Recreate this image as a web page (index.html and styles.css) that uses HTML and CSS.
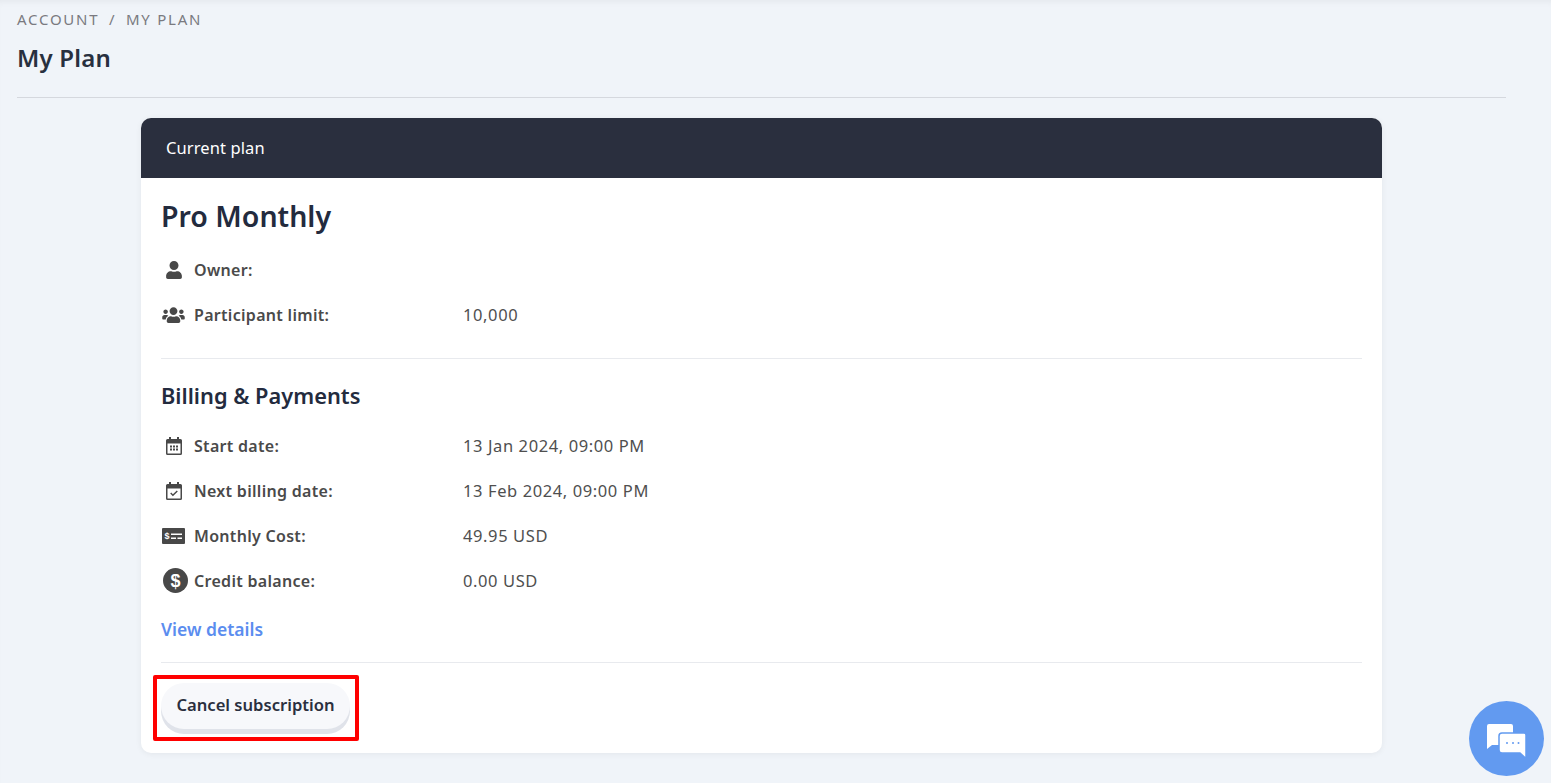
FILE: index.html
```html
<!DOCTYPE html>
<html lang="en">
<head>
    <meta charset="UTF-8">
    <title>My Plan</title>
    <link rel="stylesheet" href="styles.css">
</head>
<body>

<div class="page">
    <div class="breadcrumb">ACCOUNT <span class="sep">/</span> MY PLAN</div>
    <h1>My Plan</h1>
    <hr class="page-rule">

    <div class="card">
        <div class="card-head">Current plan</div>
        <div class="card-body">
            <h2>Pro Monthly</h2>

            <div class="row first">
                <span class="ico"><svg width="16" height="18" viewBox="0 0 448 512"><path d="M224 256c70.700 0 128-57.300 128-128S294.700 0 224 0 96 57.300 96 128s57.300 128 128 128zm89.600 32h-16.700c-22.200 10.200-46.900 16-72.900 16s-50.600-5.800-72.900-16h-16.700C60.200 288 0 348.200 0 422.400V464c0 26.500 21.500 48 48 48h352c26.500 0 48-21.500 48-48v-41.600c0-74.200-60.200-134.400-134.400-134.400z"/></svg></span>
                <span class="label">Owner:</span>
            </div>
            <div class="row">
                <span class="ico"><svg width="23" height="18" viewBox="0 0 640 512"><path d="M96 224c35.300 0 64-28.700 64-64s-28.700-64-64-64-64 28.700-64 64 28.700 64 64 64zm448 0c35.300 0 64-28.700 64-64s-28.700-64-64-64-64 28.700-64 64 28.700 64 64 64zm32 32h-64c-17.600 0-33.500 7.100-45.100 18.600 40.300 22.100 68.900 62 75.100 109.400h66c17.700 0 32-14.300 32-32v-32c0-35.300-28.700-64-64-64zm-256 0c61.900 0 112-50.100 112-112S381.900 32 320 32 208 82.100 208 144s50.100 112 112 112zm76.800 32h-8.300c-20.800 10-43.900 16-68.500 16s-47.600-6-68.500-16h-8.300C179.600 288 128 339.600 128 403.200V432c0 26.500 21.500 48 48 48h288c26.500 0 48-21.500 48-48v-28.800c0-63.600-51.600-115.200-115.200-115.200zm-223.700-13.400C161.500 263.100 145.600 256 128 256H64c-35.300 0-64 28.700-64 64v32c0 17.700 14.300 32 32 32h65.900c6.300-47.400 34.900-87.300 75.200-109.400z"/></svg></span>
                <span class="label">Participant limit:</span>
                <span class="value">10,000</span>
            </div>

            <hr class="rule rule-a">

            <h3>Billing &amp; Payments</h3>

            <div class="row first">
                <span class="ico"><svg width="16" height="18" viewBox="0 0 16 18"><path d="M3 0h2v2h6V0h2v2h1.500A1.500 1.500 0 0 1 16 3.500v13a1.500 1.500 0 0 1-1.500 1.500h-13A1.500 1.500 0 0 1 0 16.500v-13A1.500 1.500 0 0 1 1.500 2H3zM1.500 6.500v10h13v-10z"/><path d="M4 8.500h2v2H4zM7 8.500h2v2H7zM10 8.500h2v2h-2zM4 11.500h2v2H4zM7 11.500h2v2H7zM10 11.500h2v2h-2z"/></svg></span>
                <span class="label">Start date:</span>
                <span class="value">13 Jan 2024, 09:00 PM</span>
            </div>
            <div class="row">
                <span class="ico"><svg width="16" height="18" viewBox="0 0 16 18"><path d="M3 0h2v2h6V0h2v2h1.500A1.500 1.500 0 0 1 16 3.500v13a1.500 1.500 0 0 1-1.500 1.500h-13A1.500 1.500 0 0 1 0 16.500v-13A1.500 1.500 0 0 1 1.500 2H3zM1.500 6.500v10h13v-10z"/><path d="M4.200 11.600l1-1 1.700 1.700 3.900-3.900 1 1-4.900 4.900z"/></svg></span>
                <span class="label">Next billing date:</span>
                <span class="value">13 Feb 2024, 09:00 PM</span>
            </div>
            <div class="row">
                <span class="ico"><svg width="23" height="16" viewBox="0 0 23 16"><path d="M1 0h21a1 1 0 0 1 1 1v14a1 1 0 0 1-1 1H1a1 1 0 0 1-1-1V1a1 1 0 0 1 1-1z"/><text x="2.500" y="11" class="ico-text">$</text><path class="ico-cut" d="M9 5.500h11V7H9zM9 9.500h5V11H9zM15.500 9.500H20V11h-4.500z"/></svg></span>
                <span class="label">Monthly Cost:</span>
                <span class="value">49.95 USD</span>
            </div>
            <div class="row">
                <span class="ico ico-credit"><svg width="25" height="25" viewBox="0 0 25 25"><circle cx="12.500" cy="12.500" r="12.500"/><text x="12.500" y="18.500" class="ico-dollar">$</text></svg></span>
                <span class="label">Credit balance:</span>
                <span class="value">0.00 USD</span>
            </div>

            <a class="details" href="#">View details</a>

            <hr class="rule rule-b">

            <div class="cancel-wrap">
                <button class="cancel">Cancel subscription</button>
            </div>
        </div>
    </div>
</div>

<div class="chat">
    <svg width="40" height="35" viewBox="0 0 40 35">
        <path class="bubble-back" d="M2 0h22a2 2 0 0 1 2 2v7H15a3 3 0 0 0-3 3v9H5l-5 4V2a2 2 0 0 1 2-2z"/>
        <path class="bubble-front" d="M15 9h22a2 2 0 0 1 2 2v23.500L33 29H15a3 3 0 0 1-3-3V12a3 3 0 0 1 3-3z"/>
        <circle class="dot" cx="20" cy="19" r="1"/><circle class="dot" cx="26" cy="19" r="1"/><circle class="dot" cx="31.500" cy="19" r="1"/>
    </svg>
</div>

</body>
</html>
```

FILE: styles.css
```css
html, body {
    margin: 0;
    height: 100%;
}
body {
    font-family: "Noto Sans", "Open Sans", sans-serif;
    color: #4a4a4a;
    background-color: #f0f4f9;
    overflow: hidden;
    box-shadow: inset 0 6px 6px -4px rgba(0,0,0,0.05);
}
.page {
    padding: 10px 45px 0 17px;
}
.breadcrumb {
    font-size: 15px;
    line-height: 18px;
    letter-spacing: 1.75px;
    color: #7a7a80;
}
.breadcrumb .sep {
    margin: 0 4px;
}
h1 {
    margin: 12px 0 0;
    font-size: 24px;
    line-height: 36px;
    font-weight: 600;
    letter-spacing: 0.2px;
    color: #28303f;
}
.page-rule {
    margin: 21px 0 20px;
    border: 0;
    border-top: 1px solid #d5d8de;
}
.card {
    width: 1241px;
    margin-left: 124px;
    background-color: #fff;
    border-radius: 10px;
    box-shadow: 0 1px 6px rgba(0,0,0,0.06);
}
.card-head {
    height: 60px;
    line-height: 60px;
    padding-left: 25px;
    background-color: #2a2f3e;
    border-radius: 10px 10px 0 0;
    color: #fff;
    font-size: 16.500px;
    letter-spacing: 0.1px;
}
.card-body {
    padding: 20px 20px 0;
    height: 575px;
    box-sizing: border-box;
}
h2 {
    margin: -1px 0 0;
    font-size: 28.500px;
    line-height: 38px;
    font-weight: 600;
    color: #232b3e;
}
h3 {
    margin: 0;
    font-size: 21.800px;
    line-height: 30px;
    font-weight: 600;
    color: #232b3e;
}
.row {
    display: flex;
    align-items: center;
    height: 25px;
    margin-top: 20px;
    font-size: 16px;
}
.row.first {
    margin-top: 22px;
}
.ico {
    width: 25px;
    margin-right: 8px;
    flex: none;
    display: flex;
    align-items: center;
    justify-content: center;
}
.ico svg {
    flex: none;
    fill: #484848;
}
.ico-credit svg {
    margin-left: 4px;
}
.label {
    width: 269px;
    flex: none;
    font-weight: 600;
    letter-spacing: 0.3px;
}
.value {
    color: #4f4f4f;
    font-size: 16.500px;
    letter-spacing: 0.6px;
}
.ico-text {
    font-family: "Liberation Sans", sans-serif;
    font-size: 9px;
    font-weight: bold;
    fill: #fff;
}
.ico-cut {
    fill: #fff;
}
.ico-dollar {
    font-family: "Liberation Sans", sans-serif;
    font-size: 18px;
    font-weight: bold;
    text-anchor: middle;
    fill: #fff;
}
.rule {
    border: 0;
    border-top: 1px solid #e8eaee;
    margin: 0;
}
.rule-a {
    margin: 31px 0 22px;
}
.details {
    display: block;
    margin-top: 24px;
    font-size: 17.500px;
    line-height: 24px;
    font-weight: 600;
    color: #5b8def;
    text-decoration: none;
}
.rule-b {
    margin-top: 21px;
}
.cancel-wrap {
    width: 206px;
    height: 66px;
    margin: 12px 0 0 -8px;
    padding: 4px;
    box-sizing: border-box;
    border: 4px solid #f00;
    border-radius: 2px;
}
.cancel {
    display: block;
    width: 189px;
    height: 46px;
    margin: 0;
    padding: 0 0 4px;
    border: 0;
    border-radius: 23px;
    background-color: #f7f8fb;
    box-shadow: 0 5px 0 #e0e3ea;
    font-family: inherit;
    font-size: 16.600px;
    font-weight: 600;
    color: #2a2f3e;
}
.chat {
    position: fixed;
    left: 1469px;
    top: 701px;
    width: 75px;
    height: 75px;
    padding-top: 5px;
    box-sizing: border-box;
    border-radius: 50%;
    background-color: #629af0;
    display: flex;
    align-items: center;
    justify-content: center;
}
.bubble-back, .bubble-front {
    fill: #fff;
}
.bubble-front {
    stroke: #629af0;
    stroke-width: 1.500;
}
.dot {
    fill: #629af0;
}
```
